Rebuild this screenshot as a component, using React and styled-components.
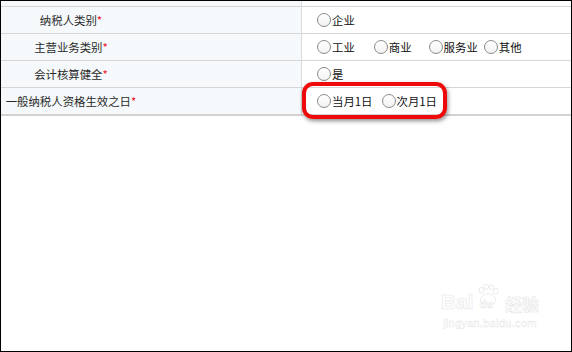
import React from "react";
import styled, { createGlobalStyle } from "styled-components";

const Global = createGlobalStyle`
  body {
    margin: 0;
    background: #fff;
    font-family: "Noto Sans CJK SC", "Noto Sans", sans-serif;
  }
`;

const rows = [
  { label: "纳税人类别", options: [{ text: "企业" }] },
  {
    label: "主营业务类别",
    options: [
      { text: "工业", space: 19 },
      { text: "商业", space: 17 },
      { text: "服务业", space: 6 },
      { text: "其他" },
    ],
  },
  { label: "会计核算健全", options: [{ text: "是" }] },
  {
    label: "一般纳税人资格生效之日",
    options: [{ text: "当月1日", space: 9 }, { text: "次月1日" }],
    last: true,
  },
];

const App = () => {
  return (
    <Frame>
      <Global />
      <Table>
        <Row>
          <LabelCell />
          <ValueCell />
        </Row>
        {rows.map(({ label, options, last }) => (
          <Row key={label} $last={last} $full>
            <LabelCell>
              <Label>
                {label}
                <Star>*</Star>
              </Label>
            </LabelCell>
            <ValueCell>
              {options.map(({ text, space }) => (
                <Option key={text} $space={space}>
                  <Radio />
                  {text}
                </Option>
              ))}
            </ValueCell>
          </Row>
        ))}
      </Table>
      <Highlight />
      <Watermark>
        <Brand>
          Bai
          <Paw viewBox="0 0 40 36">
            <ellipse cx="9" cy="10" rx="4" ry="5" />
            <ellipse cx="17" cy="4.5" rx="4" ry="4" />
            <ellipse cx="26" cy="5" rx="4" ry="4" />
            <ellipse cx="33" cy="12" rx="4" ry="5" />
            <path d="M8 30 C6 22 14 16 20 16 C28 16 35 23 32 30 C30 34 10 34 8 30 Z" />
          </Paw>
          <Du>du</Du>
          <Cn>经验</Cn>
        </Brand>
        <Site>jingyan.baidu.com</Site>
      </Watermark>
    </Frame>
  );
};
export default App;

const Frame = styled.div`
  position: relative;
  width: 572px;
  height: 352px;
  box-sizing: border-box;
  border: 1px solid #000;
  background: #fff;
  overflow: hidden;
`;

const Table = styled.div`
  display: flex;
  flex-direction: column;
`;

const Row = styled.div`
  display: grid;
  grid-template-columns: 301px 1fr;
  height: ${(p) => (p.$full ? "26px" : "5px")};
  border-bottom: ${(p) => (p.$last ? "2px solid #d2d2d2" : "1px solid #d6d6d6")};
`;

const LabelCell = styled.div`
  display: flex;
  align-items: center;
  background: #f5f9fb;
  border-right: 1px solid #dcdcdc;
`;

const Label = styled.div`
  width: 140px;
  text-align: center;
  font-size: 11.4px;
  color: #2a2a2a;
  white-space: nowrap;
`;

const Star = styled.span`
  color: #f0142b;
`;

const ValueCell = styled.div`
  display: flex;
  align-items: center;
  padding-left: 15px;
`;

const Option = styled.label`
  display: flex;
  align-items: center;
  gap: 1px;
  margin-right: ${(p) => p.$space || 0}px;
  font-size: 11.4px;
  color: #111;
  white-space: nowrap;
`;

const Radio = styled.span`
  display: inline-block;
  width: 12px;
  height: 12px;
  border: 1px solid #8a8a8a;
  border-radius: 50%;
  background: linear-gradient(#fff, #f2f2f2);
`;

const Highlight = styled.div`
  position: absolute;
  left: 301px;
  top: 81px;
  width: 137px;
  height: 29px;
  border: 4px solid #ee0a0a;
  border-radius: 11px;
  box-shadow: 1px 2px 4px rgba(0, 0, 0, 0.45);
`;

const Watermark = styled.div`
  position: absolute;
  right: 32px;
  bottom: 22px;
  display: flex;
  flex-direction: column;
  align-items: center;
  color: #fff;
  -webkit-text-stroke: 0.6px #e6e6e6;
  font-family: "Liberation Sans", Arial, sans-serif;
`;

const Brand = styled.div`
  display: flex;
  align-items: flex-end;
  font-size: 21px;
  font-weight: bold;
  line-height: 1;
`;

const Paw = styled.svg`
  width: 24px;
  height: 22px;
  margin: 0 -20px 6px 2px;
  fill: #fff;
  stroke: #e6e6e6;
  stroke-width: 1.4;
`;

const Du = styled.span`
  font-size: 11px;
  margin: 0 4px 2px 0;
  -webkit-text-stroke: 0.5px #e6e6e6;
`;

const Cn = styled.span`
  font-family: "Noto Sans CJK SC", sans-serif;
  font-size: 17px;
  margin-left: 8px;
`;

const Site = styled.div`
  margin-top: 5px;
  font-size: 11px;
  letter-spacing: 0.3px;
  -webkit-text-stroke: 0.4px #e6e6e6;
`;
